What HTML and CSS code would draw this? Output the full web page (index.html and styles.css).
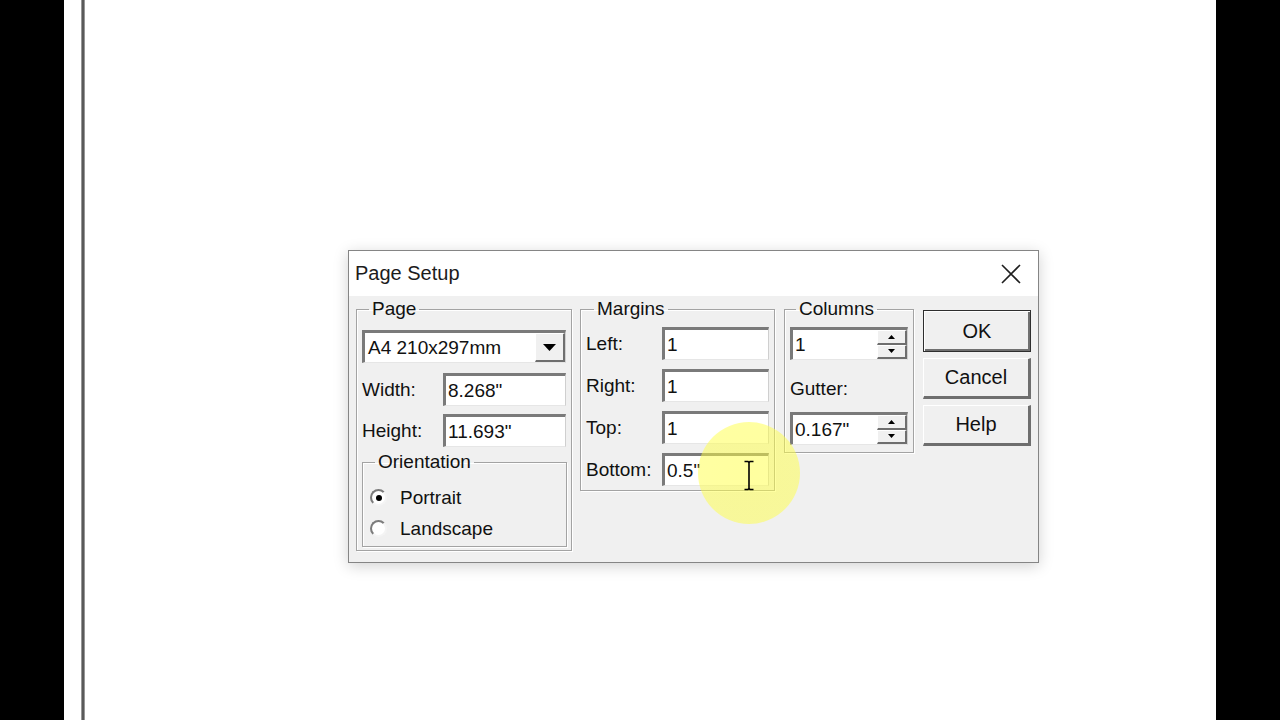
FILE: index.html
```html
<!DOCTYPE html>
<html>
<head>
<meta charset="utf-8">
<title>Page Setup</title>
<link rel="stylesheet" href="styles.css">
</head>
<body>
<div class="screen">
  <div class="bar"></div>
  <div class="page">
    <div class="rule"></div>
    <div class="dialog">
      <div class="titlebar">
        <span class="title">Page Setup</span>
        <svg class="close" width="22" height="22" viewBox="0 0 22 22"><path d="M2 2L20 20M20 2L2 20" stroke="#1e1e1e" stroke-width="1.6" fill="none"/></svg>
      </div>
      <div class="body">
        <fieldset class="group g-page">
          <legend>Page</legend>
          <div class="combo">
            <span class="combo-text">A4 210x297mm</span>
            <span class="drop"><svg width="13" height="7" viewBox="0 0 13 7"><path d="M0 0H13L6.5 7Z" fill="#000"/></svg></span>
          </div>
          <div class="row r-width"><span class="lbl lbl-page">Width:</span><div class="field f-page">8.268"</div></div>
          <div class="row r-height"><span class="lbl lbl-page">Height:</span><div class="field f-page">11.693"</div></div>
          <fieldset class="group g-orient">
            <legend>Orientation</legend>
            <div class="radio-row"><span class="radio checked"></span><span>Portrait</span></div>
            <div class="radio-row"><span class="radio"></span><span>Landscape</span></div>
          </fieldset>
        </fieldset>

        <fieldset class="group g-margins">
          <legend>Margins</legend>
          <div class="row mrow"><span class="lbl lbl-m">Left:</span><div class="field f-m">1</div></div>
          <div class="row mrow"><span class="lbl lbl-m">Right:</span><div class="field f-m">1</div></div>
          <div class="row mrow"><span class="lbl lbl-m">Top:</span><div class="field f-m">1</div></div>
          <div class="row mrow"><span class="lbl lbl-m">Bottom:</span><div class="field f-m">0.5"</div></div>
        </fieldset>

        <fieldset class="group g-columns">
          <legend>Columns</legend>
          <div class="field spinfield">
            <span class="spin-text">1</span>
            <span class="spin">
              <span class="spin-btn"><svg width="7" height="4" viewBox="0 0 7 4"><path d="M0 4H7L3.5 0Z" fill="#000"/></svg></span>
              <span class="spin-btn"><svg width="7" height="4" viewBox="0 0 7 4"><path d="M0 0H7L3.5 4Z" fill="#000"/></svg></span>
            </span>
          </div>
          <div class="gutter-lbl">Gutter:</div>
          <div class="field spinfield gutter">
            <span class="spin-text">0.167"</span>
            <span class="spin">
              <span class="spin-btn"><svg width="7" height="4" viewBox="0 0 7 4"><path d="M0 4H7L3.5 0Z" fill="#000"/></svg></span>
              <span class="spin-btn"><svg width="7" height="4" viewBox="0 0 7 4"><path d="M0 0H7L3.5 4Z" fill="#000"/></svg></span>
            </span>
          </div>
        </fieldset>

        <div class="buttons">
          <div class="btn btn-default">OK</div>
          <div class="btn">Cancel</div>
          <div class="btn">Help</div>
        </div>
      </div>
      <div class="highlight"></div>
      <svg class="ibeam" width="12" height="31" viewBox="0 0 12 31"><path d="M1.5 1.5H5L6 2.5L7 1.5H10.5M6 2.5V28.5M1.5 29.5H5L6 28.5L7 29.5H10.5" stroke="#000" stroke-width="1.6" fill="none"/></svg>
    </div>
  </div>
  <div class="bar"></div>
</div>
</body>
</html>
```

FILE: styles.css
```css
html, body {
  margin: 0;
  padding: 0;
}

body {
  font-family: "Liberation Sans", Arial, sans-serif;
  font-size: 19px;
  color: #111;
}

.screen {
  display: flex;
  width: 1280px;
  height: 720px;
  overflow: hidden;
}

.bar {
  width: 64px;
  flex: none;
  background: #000;
}

.page {
  position: relative;
  flex: 1;
  background: #fff;
}

.rule {
  margin-left: 17px;
  width: 4px;
  height: 100%;
  background: linear-gradient(to right, #c4c4c4 0, #5a5a5a 30%, #5a5a5a 70%, #c4c4c4 100%);
}

/* dialog window floating over the page */
.dialog {
  position: absolute;
  left: 284px;
  top: 250px;
  width: 691px;
  height: 313px;
  box-sizing: border-box;
  border: 1px solid #858585;
  background: #f0f0f0;
  box-shadow: 0 3px 14px rgba(0, 0, 0, 0.18);
  display: flex;
  flex-direction: column;
}

.titlebar {
  height: 45px;
  flex: none;
  background: #fff;
  display: flex;
  align-items: center;
  justify-content: space-between;
  padding: 0 16px 0 6px;
}

.title {
  font-size: 20px;
  color: #1c1c1c;
}

.close {
  display: block;
}

.body {
  flex: 1;
  display: flex;
  align-items: flex-start;
  padding: 3px 0 0 7px;
}

/* group boxes */
.group {
  box-sizing: border-box;
  margin: 0;
  min-width: 0;
  border: 1px solid #a3a3a3;
  box-shadow: inset 1px 1px 0 #fff, 1px 1px 0 #fff;
}

.group legend {
  padding: 0 3px;
  line-height: 20px;
  font-size: 19px;
  color: #111;
}

.g-page {
  width: 216px;
  height: 252px;
  padding: 11px 5px 0 5px;
}

.g-page > legend {
  margin-left: 7px;
}

.g-margins {
  width: 195px;
  height: 192px;
  margin-left: 8px;
  padding: 8px 5px 0 5px;
}

.g-margins > legend {
  margin-left: 8px;
}

.g-columns {
  width: 130px;
  height: 154px;
  margin-left: 9px;
  padding: 8px 5px 0 5px;
}

.g-columns > legend {
  margin-left: 6px;
}

.g-orient {
  width: 205px;
  height: 95px;
  margin-top: 5px;
  padding: 10px 5px 0 7px;
}

.g-orient > legend {
  margin-left: 5px;
}

/* sunken fields */
.field,
.combo {
  box-sizing: border-box;
  height: 33px;
  background: #fff;
  border-style: solid;
  border-width: 3px 1px 1px 3px;
  border-color: #7a7a7a #cfcfcf #e6e6e6 #7a7a7a;
  display: flex;
  align-items: center;
  padding-left: 2px;
  color: #111;
}

.combo {
  width: 204px;
  justify-content: space-between;
  padding-left: 3px;
  padding-right: 0;
}

.drop {
  align-self: stretch;
  width: 30px;
  box-sizing: border-box;
  background: #f0f0f0;
  border-style: solid;
  border-width: 1px 2px 2px 1px;
  border-color: #fff #6e6e6e #6e6e6e #fff;
  display: flex;
  align-items: center;
  justify-content: center;
}

.drop svg {
  display: block;
}

.row {
  display: flex;
  align-items: center;
}

.r-width {
  margin-top: 10px;
}

.r-height {
  margin-top: 8px;
}

.lbl-page {
  width: 81px;
}

.f-page {
  width: 123px;
}

.mrow + .mrow {
  margin-top: 9px;
}

.lbl-m {
  width: 76px;
}

.f-m {
  width: 107px;
}

/* radio buttons */
.radio-row {
  display: flex;
  align-items: center;
  height: 31px;
}

.radio {
  box-sizing: border-box;
  width: 17px;
  height: 17px;
  border-radius: 50%;
  border: 2px solid;
  border-color: #7c7c7c #f4f4f4 #f4f4f4 #7c7c7c;
  background: #fff;
  margin-right: 13px;
  display: flex;
  align-items: center;
  justify-content: center;
}

.radio.checked::after {
  content: "";
  width: 6px;
  height: 6px;
  border-radius: 50%;
  background: #000;
}

/* spin fields */
.spinfield {
  width: 118px;
  padding-right: 0;
  justify-content: space-between;
}

.spin {
  align-self: stretch;
  width: 30px;
  display: flex;
  flex-direction: column;
}

.spin-btn {
  flex: 1;
  box-sizing: border-box;
  background: #f0f0f0;
  border-style: solid;
  border-width: 1px 2px 2px 1px;
  border-color: #fff #6e6e6e #6e6e6e #fff;
  display: flex;
  align-items: center;
  justify-content: center;
}

.spin-btn svg {
  display: block;
}

.gutter-lbl {
  margin-top: 18px;
  line-height: 22px;
}

.gutter {
  margin-top: 12px;
}

/* push buttons */
.buttons {
  margin-left: 9px;
  margin-top: 11px;
  display: flex;
  flex-direction: column;
  gap: 6px;
}

.btn {
  box-sizing: border-box;
  width: 108px;
  height: 41px;
  background: #f0f0f0;
  border-style: solid;
  border-width: 1px 3px 3px 1px;
  border-color: #fff #6e6e6e #6e6e6e #fff;
  display: flex;
  align-items: center;
  justify-content: center;
  font-size: 20px;
  color: #111;
}

.btn-default {
  height: 42px;
  border: 1px solid #2e2e2e;
  box-shadow: inset 1px 1px 0 #fff, inset -2px -2px 0 #707070;
}

/* cursor highlight overlay */
.highlight {
  position: absolute;
  left: 349px;
  top: 171px;
  width: 102px;
  height: 102px;
  border-radius: 50%;
  background: radial-gradient(circle, rgba(255, 255, 70, 0.52) 0, rgba(255, 255, 70, 0.5) 80%, rgba(255, 255, 70, 0) 100%);
  pointer-events: none;
}

.ibeam {
  position: absolute;
  left: 394px;
  top: 209px;
}
```
